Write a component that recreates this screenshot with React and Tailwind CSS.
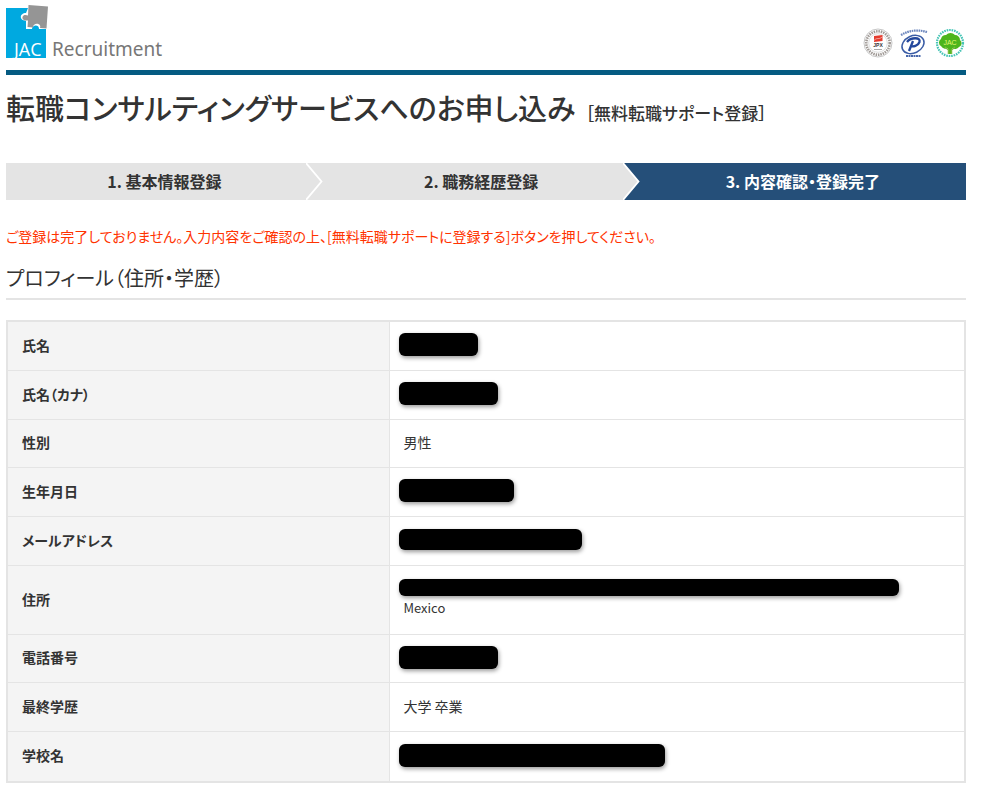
const steps = ['1. 基本情報登録', '2. 職務経歴登録', '3. 内容確認・登録完了'];

const rows = [
  { label: '氏名', mask: 'w-[79px] h-[23px]', height: 'h-[49px]' },
  { label: '氏名（カナ）', mask: 'w-[99px] h-[23px]', height: 'h-[49px]' },
  { label: '性別', value: '男性', height: 'h-12' },
  { label: '生年月日', mask: 'w-[115px] h-[23px]', height: 'h-[49px]' },
  { label: 'メールアドレス', mask: 'w-[183px] h-[21px]', height: 'h-[49px]' },
  { label: '住所', mask: 'w-[500px] h-[17px]', value: 'Mexico', height: 'h-[69px]' },
  { label: '電話番号', mask: 'w-[99px] h-[23px]', height: 'h-12' },
  { label: '最終学歴', value: '大学 卒業', height: 'h-[49px]' },
  { label: '学校名', mask: 'w-[266px] h-[23px]', height: 'h-[49px]' },
];

function Logo() {
  return (
    <a href="#" className="flex items-end">
      <svg width="44" height="54" viewBox="0 0 44 54" className="overflow-visible">
        <path d="M0 3H22L20 8C17 8 14 10 15 13C16 16 19 15 20 16L20 24H26C26 20 33 19 33 24H40V53H0Z" fill="#00a9e0" />
        <path d="M22.500 0L42 1.500L40.500 23.500L34 23C36 18 27 17 27 22.500L21.500 22L22 15.500C19.500 16 16 15 16.500 12C17 9.500 20 9.500 22 10.500Z" fill="#959595" />
        <text x="8" y="51" fontSize="18" fill="#fff" fontFamily="'Open Sans','Noto Sans',sans-serif">JAC</text>
      </svg>
      <span className="pl-0.5 font-['Noto_Sans','Open_Sans',sans-serif] text-[19px] leading-5 text-[#777777]">Recruitment</span>
    </a>
  );
}

function Badges() {
  return (
    <div className="flex gap-1.5 pb-px pr-px">
      <svg width="30" height="30" viewBox="0 0 30 30">
        <circle cx="15" cy="15" r="14" fill="#fff" stroke="#b8b8b8" strokeWidth="0.8" />
        <circle cx="15" cy="15" r="11.700" fill="none" stroke="#a09a96" strokeWidth="2.600" strokeDasharray="1.500 0.900" />
        <circle cx="15" cy="15" r="9.300" fill="#fff" stroke="#c6c6c6" strokeWidth="0.600" />
        <path d="M11 8L19.500 7V13L11 14Z" fill="#e43b2e" />
        <path d="M11 12.500C14 9 16 12 19 9" stroke="#f8b5ad" strokeWidth="0.800" fill="none" />
        <text x="15" y="19" fontSize="5" fontWeight="700" textAnchor="middle" fill="#333" fontFamily="'Liberation Sans',sans-serif">JPX</text>
        <path d="M11 21.500H19" stroke="#aaa" strokeWidth="1" />
      </svg>
      <svg width="30" height="30" viewBox="0 0 30 30">
        <ellipse cx="14" cy="16.500" rx="11.500" ry="8.500" fill="none" stroke="#3a5ca5" strokeWidth="1.500" transform="rotate(-25 14 16.500)" />
        <path d="M10 23L14 13M8 14C12 9 22 9 20.500 14C19 18 14 19 12 18" fill="none" stroke="#23479c" strokeWidth="2.300" />
        <path d="M2 7Q14 0 28 4" fill="none" stroke="#6c86bd" strokeWidth="2.200" strokeDasharray="1.600 0.700" />
        <path d="M7 28H22" stroke="#4766aa" strokeWidth="2.200" strokeDasharray="2 0.500" />
      </svg>
      <svg width="30" height="30" viewBox="0 0 30 30">
        <circle cx="15" cy="15" r="13" fill="none" stroke="#45c4b5" strokeWidth="2.200" strokeDasharray="1.600 0.900" />
        <path d="M6 18A4 4 0 0 1 6 11A5 5 0 0 1 11 7A6 6 0 0 1 20 7A5 5 0 0 1 25 12A4 4 0 0 1 24 19A5 5 0 0 1 17 20L17 26H13V20A5 5 0 0 1 6 18Z" fill="#4db51c" />
        <path d="M10 19L13.500 22V26M20 19L16.500 22V26" fill="none" stroke="#79bd3e" strokeWidth="1.500" />
        <text x="15" y="16.500" fontSize="7" textAnchor="middle" fill="#e6f572" fontFamily="'Liberation Sans',sans-serif">JAC</text>
      </svg>
    </div>
  );
}

function Chevron({ next }) {
  return (
    <svg className="absolute right-0 top-0" width="17" height="37" viewBox="0 0 17 37">
      <path d="M0 0L15.500 18.500L0 37H17V0Z" fill={next} />
      <path d="M0 0L15.500 18.500L0 37" fill="none" stroke="#fff" strokeWidth="1.800" />
    </svg>
  );
}

export default function App() {
  return (
    <div className="ml-1.5 mr-[15px] bg-white pb-2 font-['Noto_Sans_CJK_JP',sans-serif] text-[#333333] [font-feature-settings:'palt']">
      <header className="flex items-end justify-between border-b-[5px] border-[#055b82] pb-[11px] pt-[5px]">
        <Logo />
        <Badges />
      </header>

      <h1 className="flex items-baseline gap-2.5 pt-2.5 text-[29px] font-medium leading-[44px]">
        転職コンサルティングサービスへのお申し込み
        <span className="text-[17px] font-medium">［無料転職サポート登録］</span>
      </h1>

      <ol className="mt-7 grid grid-cols-[33%_33%_34%] text-center text-[16px] font-bold leading-9">
        {steps.map((step, i) => (
          <li key={step} className={i === 2 ? 'bg-[#254f79] pb-px text-white' : 'relative bg-[#e4e4e4] pb-px'}>
            {step}
            {i < 2 && <Chevron next={i === 1 ? '#254f79' : '#e4e4e4'} />}
          </li>
        ))}
      </ol>

      <p className="mt-[26px] text-[14px] leading-5 text-[#ff3300]">
        ご登録は完了しておりません。入力内容をご確認の上、[無料転職サポートに登録する]ボタンを押してください。
      </p>

      <h2 className="mt-4 border-b-2 border-[#e4e4e4] pb-1 text-[20px] leading-8">プロフィール（住所・学歴）</h2>

      <table className="mt-5 w-full table-fixed border-separate border-spacing-0 border-2 border-[#e4e4e4] text-[14px] leading-5">
        <tbody>
          {rows.map((row, i) => {
            const line = i < rows.length - 1 ? 'border-b' : '';
            return (
              <tr key={row.label} className={row.height}>
                <th scope="row" className={`w-2/5 border-r border-[#e4e4e4] bg-[#f4f4f4] pb-[3px] pl-3.5 text-left font-bold ${line}`}>
                  {row.label}
                </th>
                <td className={`border-[#e4e4e4] pb-[3px] pl-[13px] ${line}`}>
                  {row.mask && <div className={`-ml-1 rounded-md bg-black shadow-[1px_2px_4px_rgba(0,0,0,0.4)] ${row.mask}`} />}
                  {row.value && <div className={row.mask ? 'pt-0.5 text-[13px]' : ''}>{row.value}</div>}
                </td>
              </tr>
            );
          })}
        </tbody>
      </table>
    </div>
  );
}
